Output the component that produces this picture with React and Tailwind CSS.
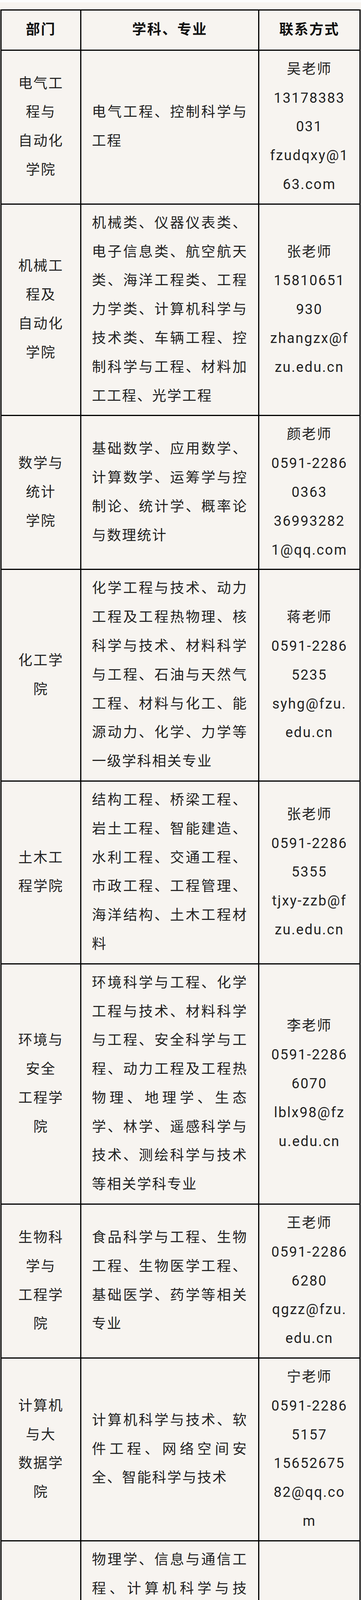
import React from "react";

const rows = [
  {
    dept: ["电气工", "程与", "自动化", "学院"],
    majors: ["电气工程、控制科学与", "工程"],
    contact: ["吴老师", "13178383", "031", "fzudqxy@1", "63.com"],
  },
  {
    dept: ["机械工", "程及", "自动化", "学院"],
    majors: [
      "机械类、仪器仪表类、",
      "电子信息类、航空航天",
      "类、海洋工程类、工程",
      "力学类、计算机科学与",
      "技术类、车辆工程、控",
      "制科学与工程、材料加",
      "工工程、光学工程",
    ],
    contact: ["张老师", "15810651", "930", "zhangzx@f", "zu.edu.cn"],
  },
  {
    dept: ["数学与", "统计", "学院"],
    majors: ["基础数学、应用数学、", "计算数学、运筹学与控", "制论、统计学、概率论", "与数理统计"],
    contact: ["颜老师", "0591-2286", "0363", "36993282", "1@qq.com"],
  },
  {
    dept: ["化工学", "院"],
    majors: [
      "化学工程与技术、动力",
      "工程及工程热物理、核",
      "科学与技术、材料科学",
      "与工程、石油与天然气",
      "工程、材料与化工、能",
      "源动力、化学、力学等",
      "一级学科相关专业",
    ],
    contact: ["蒋老师", "0591-2286", "5235", "syhg@fzu.", "edu.cn"],
  },
  {
    dept: ["土木工", "程学院"],
    majors: [
      "结构工程、桥梁工程、",
      "岩土工程、智能建造、",
      "水利工程、交通工程、",
      "市政工程、工程管理、",
      "海洋结构、土木工程材",
      "料",
    ],
    contact: ["张老师", "0591-2286", "5355", "tjxy-zzb@f", "zu.edu.cn"],
  },
  {
    dept: ["环境与", "安全", "工程学", "院"],
    majors: [
      "环境科学与工程、化学",
      "工程与技术、材料科学",
      "与工程、安全科学与工",
      "程、动力工程及工程热",
      "物理、地理学、生态",
      "学、林学、遥感科学与",
      "技术、测绘科学与技术",
      "等相关学科专业",
    ],
    contact: ["李老师", "0591-2286", "6070", "lblx98@fz", "u.edu.cn"],
  },
  {
    dept: ["生物科", "学与", "工程学", "院"],
    majors: ["食品科学与工程、生物", "工程、生物医学工程、", "基础医学、药学等相关", "专业"],
    contact: ["王老师", "0591-2286", "6280", "qgzz@fzu.", "edu.cn"],
  },
  {
    dept: ["计算机", "与大", "数据学", "院"],
    majors: ["计算机科学与技术、软", "件工程、网络空间安", "全、智能科学与技术"],
    contact: ["宁老师", "0591-2286", "5157", "15652675", "82@qq.co", "m"],
  },
  {
    dept: ["物理与", "信息", "工程学", "院"],
    majors: [
      "物理学、信息与通信工",
      "程、计算机科学与技",
      "术、人工智能、机器视",
      "觉与信息系统，电子科",
      "学与技术、光电信息工",
      "程、微电子、集成电路",
      "设计与系统集成、光学",
      "工程、控制工程等电子",
      "信息类",
    ],
    contact: ["夏老师", "0591-2286", "5132", "dean_pie@", "fzu.edu.cn"],
  },
  {
    dept: ["化学学", "院"],
    majors: ["催化化学、分析化学、", "能源化学、药物化学及", "化学、化工相关专业的", "研究方向"],
    contact: ["华老师", "0591-2286", "5762", "28116332", "6@qq.com"],
  },
  {
    dept: ["建筑与", "城乡", "规划学", "院"],
    majors: ["建筑学、城乡规划学、", "风景园林学"],
    contact: ["周老师", "0591-2286", "6390", "5434515@", "qq.com"],
  },
];

function Lines({ lines, justify }) {
  return lines.map((l, i) => (
    <div
      key={i}
      className={
        "whitespace-nowrap leading-[73.8px] " +
        (justify && i < lines.length - 1 ? "text-justify [text-align-last:justify]" : "")
      }
    >
      {l}
    </div>
  ));
}

export default function App() {
  const cell = "border-[3px] border-black align-middle";
  return (
    <div className="min-h-screen bg-[#f7f4f0] pb-10 [font-family:Roboto,'Noto_Sans_CJK_SC',sans-serif] text-[36px] tracking-[2.5px] text-[#222]">
      <div className="h-[6px] bg-[#fcfcfc]" />
      <div className="pt-[18px] pl-[1px]">
        <table className="w-[918px] table-fixed border-collapse">
          <colgroup>
            <col className="w-[204px]" />
            <col className="w-[455px]" />
            <col className="w-[259px]" />
          </colgroup>
          <thead>
            <tr className="font-bold text-[#111]">
              <th className={cell + " py-[13px] leading-[73.8px]"}>部门</th>
              <th className={cell + " py-[13px] leading-[73.8px]"}>学科、专业</th>
              <th className={cell + " py-[13px] leading-[73.8px]"}>联系方式</th>
            </tr>
          </thead>
          <tbody>
            {rows.map((r, i) => (
              <tr key={i}>
                <td className={cell + " px-2 py-[11px] text-center"}>
                  <Lines lines={r.dept} />
                </td>
                <td className={cell + " pl-[27px] pr-[27px] py-[11px] text-left"}>
                  <Lines lines={r.majors} justify />
                </td>
                <td className={cell + " px-1 py-[11px] text-center"}>
                  <Lines lines={r.contact} />
                </td>
              </tr>
            ))}
          </tbody>
        </table>
      </div>
    </div>
  );
}
